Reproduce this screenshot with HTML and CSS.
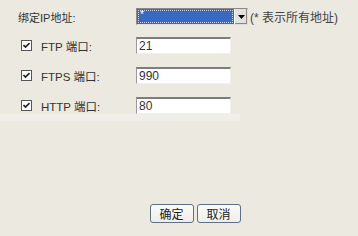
FILE: index.html
```html
<!DOCTYPE html>
<html>
<head>
<meta charset="utf-8">
<link rel="stylesheet" href="styles.css">
</head>
<body>
<div class="dialog">
  <div class="row row-ip">
    <div class="label label-ip">绑定IP地址:</div>
    <div class="select">
      <div class="select-value"><span class="focus">*</span></div>
      <div class="select-btn"><svg width="7" height="4" viewBox="0 0 7 4"><path d="M0 0H7L3.5 4Z" fill="#000"/></svg></div>
    </div>
    <div class="hint">(* 表示所有地址)</div>
  </div>
  <div class="row row-port">
    <div class="label label-check"><span class="check"><svg width="7" height="7" viewBox="0 0 7 7"><path d="M0.5 3L2.5 5L6.5 1" stroke="#222" stroke-width="1.6" fill="none"/></svg></span><span>FTP 端口:</span></div>
    <div class="input">21</div>
  </div>
  <div class="row row-port">
    <div class="label label-check"><span class="check"><svg width="7" height="7" viewBox="0 0 7 7"><path d="M0.5 3L2.5 5L6.5 1" stroke="#222" stroke-width="1.6" fill="none"/></svg></span><span>FTPS 端口:</span></div>
    <div class="input">990</div>
  </div>
  <div class="row row-port">
    <div class="label label-check"><span class="check"><svg width="7" height="7" viewBox="0 0 7 7"><path d="M0.5 3L2.5 5L6.5 1" stroke="#222" stroke-width="1.6" fill="none"/></svg></span><span>HTTP 端口:</span></div>
    <div class="input">80</div>
  </div>
  <div class="band"></div>
  <div class="buttons">
    <button class="btn">确定</button>
    <button class="btn">取消</button>
  </div>
</div>
</body>
</html>
```
FILE: styles.css
```css
html, body {
  margin: 0;
  padding: 0;
}
body {
  width: 358px;
  height: 236px;
  background: #ebe9e0;
  font-family: "Liberation Sans", "Noto Sans CJK SC", sans-serif;
  font-size: 12px;
  color: #333;
  overflow: hidden;
}
.dialog {
  height: 236px;
  display: flex;
  flex-direction: column;
  padding-top: 8px;
  box-sizing: border-box;
}
.row {
  display: flex;
  align-items: center;
  height: 17px;
}
.row-port {
  margin-top: 13px;
}
.row-ip + .row-port {
  margin-top: 12px;
}
.label {
  width: 136px;
  flex: none;
  display: flex;
  align-items: center;
  font-size: 11.5px;
}
.label-ip {
  padding-left: 18px;
  box-sizing: border-box;
  font-size: 11px;
}
.label-check {
  padding-left: 21px;
  box-sizing: border-box;
}
.check {
  width: 9px;
  height: 9px;
  border: 1px solid #555;
  background: #fff;
  margin-right: 9px;
  display: flex;
  align-items: center;
  justify-content: center;
}
.select {
  display: flex;
  width: 112px;
  height: 17px;
  box-sizing: border-box;
  border: 1px solid #8a8a8a;
  border-right-color: #e0e0e0;
  border-bottom-color: #e0e0e0;
  background: #fff;
}
.select-value {
  flex: 1;
  background: #3a69c4;
  padding: 1px;
  box-sizing: border-box;
}
.focus {
  display: block;
  height: 100%;
  box-sizing: border-box;
  border: 1px dotted #c8d4ee;
  color: #fff;
  font-size: 10px;
  line-height: 8px;
  padding-left: 1px;
}
.select-btn {
  width: 12px;
  background: #e4e2da;
  border-left: 1px solid #fff;
  box-shadow: inset -1px -1px 0 #888;
  display: flex;
  align-items: center;
  justify-content: center;
}
.hint {
  margin-left: 2px;
  color: #444;
}
.input {
  width: 95px;
  height: 17px;
  box-sizing: border-box;
  border: 1px solid #9a9a9a;
  border-top: 2px solid #7d7d7d;
  border-right-color: #f0f0f0;
  border-bottom-color: #f0f0f0;
  background: #fff;
  padding-left: 2px;
  line-height: 14px;
  color: #333;
}
.band {
  width: 240px;
  height: 7px;
  background: #efeee8;
}
.buttons {
  margin-top: auto;
  display: flex;
  justify-content: center;
  gap: 3px;
  padding-bottom: 13px;
  padding-left: 32px;
}
.btn {
  width: 44px;
  height: 19px;
  font-family: "Liberation Sans", "Noto Sans CJK SC", sans-serif;
  font-size: 12px;
  color: #222;
  background: linear-gradient(#fbfbf8, #efeee8);
  border: 1px solid #5f6f86;
  border-radius: 3px;
  padding: 0;
}
```
